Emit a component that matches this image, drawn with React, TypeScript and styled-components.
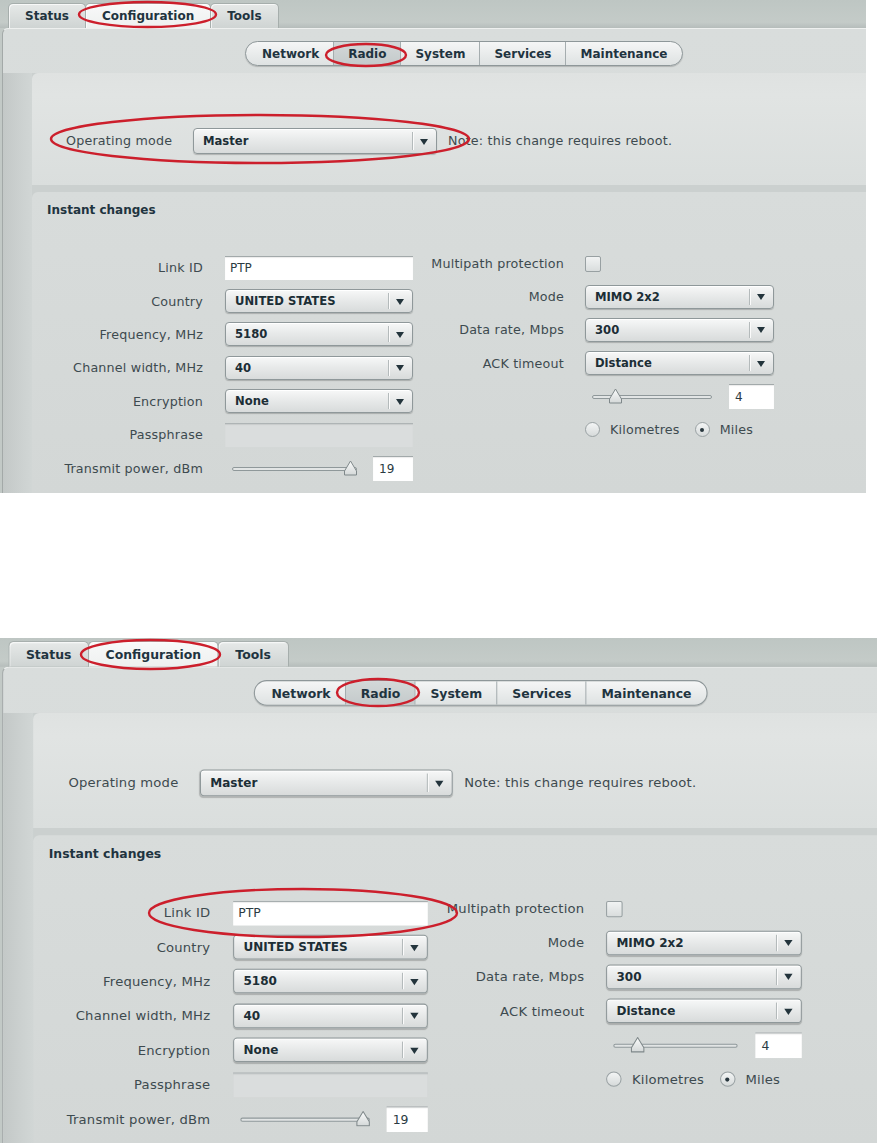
import React from "react";
import styled, { createGlobalStyle } from "styled-components";

const GlobalStyle = createGlobalStyle`
  html, body {
    margin: 0;
    padding: 0;
    background: #fff;
  }
  body {
    font-family: "DejaVu Sans", Verdana, sans-serif;
  }
`;

const Page = styled.div`
  display: flex;
  flex-direction: column;
  gap: 145px;
  width: 877px;
`;

const Shot = styled.div<{ $w: number; $h: number }>`
  position: relative;
  width: ${(p) => p.$w}px;
  height: ${(p) => p.$h}px;
  overflow: hidden;
`;

const Screen = styled.div<{ $sx: number; $sy: number }>`
  width: 866px;
  height: 493px;
  display: flex;
  flex-direction: column;
  background: #c2c9c6;
  transform: scale(${(p) => p.$sx}, ${(p) => p.$sy});
  transform-origin: 0 0;
`;

const TopBar = styled.div`
  height: 28px;
  box-sizing: border-box;
  padding-left: 8px;
  display: flex;
  align-items: flex-end;
  background: linear-gradient(#bec6c3, #c4cbc8 80%, #b6bdbb);
`;

const Tab = styled.div<{ $active?: boolean }>`
  height: 25px;
  box-sizing: border-box;
  padding: 0 16px;
  display: flex;
  align-items: center;
  font-size: 12px;
  font-weight: bold;
  color: #1f3440;
  border: 1px solid #a6aeac;
  border-bottom: none;
  border-radius: 5px 5px 0 0;
  margin-right: -1px;
  background: ${(p) =>
    p.$active
      ? "linear-gradient(#f8f9f9, #eef0ef)"
      : "linear-gradient(#e6e9e8, #cfd4d3)"};
  box-shadow: inset 1px 1px 0 rgba(255, 255, 255, 0.7);
`;

const Panel = styled.div`
  flex: 1;
  display: flex;
  flex-direction: column;
  margin-left: 2px;
  border-top: 1px solid #eef0ef;
  border-left: 1px solid #a3a9a8;
  border-top-left-radius: 6px;
  background: linear-gradient(#d9dddc, #d4d9d8);
  min-height: 0;
`;

const SubNav = styled.div`
  display: flex;
  padding: 12px 0 7px 242px;
`;

const Pill = styled.div`
  display: flex;
  height: 25px;
  box-sizing: border-box;
  border: 1px solid #8e9799;
  border-radius: 13px;
  overflow: hidden;
  background: linear-gradient(#f5f6f6, #dee2e2);
  box-shadow: 0 1px 1px rgba(0, 0, 0, 0.18);
`;

const PillItem = styled.div<{ $active?: boolean }>`
  display: flex;
  align-items: center;
  padding: 0 14px;
  font-size: 12px;
  font-weight: bold;
  color: #1f3440;
  border-left: 1px solid #a5adaf;
  background: ${(p) =>
    p.$active ? "linear-gradient(#d3d8d8, #c4cacb)" : "transparent"};

  &:first-child {
    border-left: none;
    padding-left: 16px;
  }
`;

const Body = styled.div`
  flex: 1;
  display: flex;
  padding-left: 29px;
  background: linear-gradient(90deg, #c3c8c7 0, #cdd2d1 20px, #d1d6d5 29px);
  min-height: 0;
`;

const Stack = styled.div`
  flex: 1;
  display: flex;
  flex-direction: column;
  gap: 7px;
  background: #cbd0cf;
`;

const ModeBox = styled.div`
  height: 112px;
  box-sizing: border-box;
  padding: 55px 0 0 34px;
  display: flex;
  align-items: flex-start;
  border-top-left-radius: 6px;
  background: linear-gradient(#dfe2e1, #e1e4e3 20%, #dadedd);
`;

const InstantBox = styled.div`
  flex: 1;
  border-top-left-radius: 6px;
  background: linear-gradient(#d8dcdb, #d3d7d6);
`;

const BoxTitle = styled.div`
  padding: 11px 0 0 15px;
  font-size: 12px;
  line-height: 14px;
  font-weight: bold;
  color: #1f3440;
`;

const FormArea = styled.div`
  display: flex;
  align-items: flex-start;
  margin-top: 34px;
`;

const FormColumn = styled.div<{ $label: number; $control: number; $gap: number; $row: number; $shift: number; $left: number }>`
  display: grid;
  grid-template-columns: ${(p) => p.$label}px ${(p) => p.$control}px;
  column-gap: ${(p) => p.$gap}px;
  grid-auto-rows: ${(p) => p.$row}px;
  align-items: center;
  margin-top: ${(p) => p.$shift}px;
  margin-left: ${(p) => p.$left}px;
`;

const Label = styled.div<{ $w?: number }>`
  ${(p) => (p.$w ? `width: ${p.$w}px; flex-shrink: 0;` : "")}
  text-align: right;
  font-size: 12.7px;
  letter-spacing: 0.2px;
  color: #3d4a4f;
  white-space: nowrap;
`;

const ModeLabel = styled(Label)`
  text-align: left;
  line-height: 26px;
`;

const Note = styled.div`
  margin-left: 11px;
  font-size: 12.7px;
  letter-spacing: 0.2px;
  line-height: 26px;
  color: #3d4a4f;
  white-space: nowrap;
`;

const SelectBox = styled.div<{ $w?: number; $h?: number }>`
  width: ${(p) => (p.$w ? `${p.$w}px` : "100%")};
  height: ${(p) => p.$h ?? 24}px;
  box-sizing: border-box;
  display: flex;
  align-items: center;
  border: 1px solid #8f989a;
  border-radius: 4px;
  background: linear-gradient(#f7f8f8, #e8eaea 45%, #d8dbdb);
  box-shadow: 0 1px 1px rgba(0, 0, 0, 0.2), inset 0 1px 0 #fff;
`;

const SelectValue = styled.span`
  flex: 1;
  padding-left: 9px;
  font-size: 11.6px;
  font-weight: bold;
  color: #1c2e36;
  white-space: nowrap;
`;

const SelectArrow = styled.span`
  position: relative;
  width: 24px;
  height: 100%;
  display: flex;
  align-items: center;
  justify-content: center;

  &::before {
    content: "";
    position: absolute;
    left: 0;
    top: 3px;
    bottom: 3px;
    width: 1px;
    background: #b4babb;
    box-shadow: 1px 0 0 #fbfbfb;
  }

  &::after {
    content: "";
    border-left: 4px solid transparent;
    border-right: 4px solid transparent;
    border-top: 6px solid #23343c;
    margin-top: 1px;
  }
`;

const TextField = styled.div<{ $w?: number; $disabled?: boolean }>`
  width: ${(p) => (p.$w ? `${p.$w}px` : "100%")};
  height: 24px;
  box-sizing: border-box;
  display: flex;
  align-items: center;
  padding-left: 5px;
  font-size: 12px;
  color: #2b3b42;
  background: ${(p) => (p.$disabled ? "#dadddd" : "#fff")};
  border-top: 1px solid ${(p) => (p.$disabled ? "#aeb4b5" : "#a2a9aa")};
  box-shadow: inset 0 1px 1px rgba(0, 0, 0, 0.08);
`;

const NumberField = styled(TextField)`
  height: 25px;
  padding-left: 6px;
  flex-shrink: 0;
`;

const ControlRow = styled.div`
  display: flex;
  align-items: center;
`;

const SliderWrap = styled.div<{ $w: number }>`
  position: relative;
  width: ${(p) => p.$w}px;
  height: 16px;
  margin-left: 7px;
  margin-right: auto;
  display: flex;
  align-items: center;
`;

const Track = styled.div`
  flex: 1;
  height: 4px;
  box-sizing: border-box;
  border: 1px solid #8f989a;
  border-radius: 3px;
  background: #e2e5e5;
  margin-top: 2px;
`;

const Thumb = styled.svg`
  position: absolute;
  top: 0;
  width: 15px;
  height: 16px;
  margin-left: -7px;
`;

const Check = styled.div`
  width: 16px;
  height: 16px;
  box-sizing: border-box;
  border: 1px solid #98a0a2;
  border-radius: 2px;
  background: linear-gradient(#f1f3f3, #d9dddd);
`;

const Radio = styled.div<{ $on?: boolean }>`
  width: 15px;
  height: 15px;
  box-sizing: border-box;
  border: 1px solid #9aa2a4;
  border-radius: 50%;
  background: linear-gradient(#f3f5f5, #d6dada);
  display: flex;
  align-items: center;
  justify-content: center;
  flex-shrink: 0;

  &::after {
    content: "";
    width: 4px;
    height: 4px;
    border-radius: 50%;
    background: ${(p) => (p.$on ? "#27363d" : "transparent")};
  }
`;

const RadioText = styled.span<{ $gap: number }>`
  margin-left: 10px;
  margin-right: ${(p) => p.$gap}px;
  font-size: 12.7px;
  letter-spacing: 0.2px;
  color: #3d4a4f;
`;

const Marks = styled.svg`
  position: absolute;
  left: 0;
  top: 0;
  pointer-events: none;
`;

type Ellipse = { cx: number; cy: number; rx: number; ry: number };

function Slider({ width, value }: { width: number; value: number }) {
  return (
    <SliderWrap $w={width}>
      <Track />
      <Thumb viewBox="0 0 15 16" style={{ left: `${value * 100}%` }}>
        <defs>
          <linearGradient id="thumbFill" x1="0" y1="0" x2="0" y2="1">
            <stop offset="0" stopColor="#fbfcfc" />
            <stop offset="1" stopColor="#d4d8d8" />
          </linearGradient>
        </defs>
        <path
          d="M7.5 1 L13.5 11 L13.5 15 L1.5 15 L1.5 11 Z"
          fill="url(#thumbFill)"
          stroke="#7f888a"
          strokeWidth="1"
          strokeLinejoin="round"
        />
      </Thumb>
    </SliderWrap>
  );
}

function Select({ value, width, height }: { value: string; width?: number; height?: number }) {
  return (
    <SelectBox $w={width} $h={height}>
      <SelectValue>{value}</SelectValue>
      <SelectArrow />
    </SelectBox>
  );
}

const leftRows: { label: string; kind: "text" | "select" | "disabled" | "slider"; value: string }[] = [
  { label: "Link ID", kind: "text", value: "PTP" },
  { label: "Country", kind: "select", value: "UNITED STATES" },
  { label: "Frequency, MHz", kind: "select", value: "5180" },
  { label: "Channel width, MHz", kind: "select", value: "40" },
  { label: "Encryption", kind: "select", value: "None" },
  { label: "Passphrase", kind: "disabled", value: "" },
  { label: "Transmit power, dBm", kind: "slider", value: "19" },
];

function RadioScreen({ sx, sy }: { sx: number; sy: number }) {
  return (
    <Screen $sx={sx} $sy={sy}>
      <TopBar>
        <Tab>Status</Tab>
        <Tab $active>Configuration</Tab>
        <Tab>Tools</Tab>
      </TopBar>
      <Panel>
        <SubNav>
          <Pill>
            <PillItem>Network</PillItem>
            <PillItem $active>Radio</PillItem>
            <PillItem>System</PillItem>
            <PillItem>Services</PillItem>
            <PillItem>Maintenance</PillItem>
          </Pill>
        </SubNav>
        <Body>
          <Stack>
            <ModeBox>
              <ModeLabel $w={127}>Operating mode</ModeLabel>
              <Select value="Master" width={244} height={26} />
              <Note>Note: this change requires reboot.</Note>
            </ModeBox>
            <InstantBox>
              <BoxTitle>Instant changes</BoxTitle>
              <FormArea>
                <FormColumn $label={171} $control={188} $gap={22} $row={33.4} $shift={0} $left={0}>
                  {leftRows.map((r) => (
                    <React.Fragment key={r.label}>
                      <Label>{r.label}</Label>
                      {r.kind === "text" && <TextField>{r.value}</TextField>}
                      {r.kind === "select" && <Select value={r.value} />}
                      {r.kind === "disabled" && <TextField $disabled />}
                      {r.kind === "slider" && (
                        <ControlRow>
                          <Slider width={125} value={0.94} />
                          <NumberField $w={40}>{r.value}</NumberField>
                        </ControlRow>
                      )}
                    </React.Fragment>
                  ))}
                </FormColumn>
                <FormColumn $label={144} $control={189} $gap={21} $row={33.2} $shift={-4} $left={7}>
                  <Label>Multipath protection</Label>
                  <Check />
                  <Label>Mode</Label>
                  <Select value="MIMO 2x2" />
                  <Label>Data rate, Mbps</Label>
                  <Select value="300" />
                  <Label>ACK timeout</Label>
                  <Select value="Distance" />
                  <Label />
                  <ControlRow>
                    <Slider width={120} value={0.19} />
                    <NumberField $w={45}>4</NumberField>
                  </ControlRow>
                  <Label />
                  <ControlRow>
                    <Radio />
                    <RadioText $gap={15}>Kilometres</RadioText>
                    <Radio $on />
                    <RadioText $gap={0}>Miles</RadioText>
                  </ControlRow>
                </FormColumn>
              </FormArea>
            </InstantBox>
          </Stack>
        </Body>
      </Panel>
    </Screen>
  );
}

function Annotations({ width, height, marks }: { width: number; height: number; marks: Ellipse[] }) {
  return (
    <Marks width={width} height={height} viewBox={`0 0 ${width} ${height}`}>
      {marks.map((m, i) => (
        <ellipse
          key={i}
          cx={m.cx}
          cy={m.cy}
          rx={m.rx}
          ry={m.ry}
          fill="none"
          stroke="#cc1f2c"
          strokeWidth="2.4"
        />
      ))}
    </Marks>
  );
}

const firstMarks: Ellipse[] = [
  { cx: 147.5, cy: 14.5, rx: 68.5, ry: 12.5 },
  { cx: 366, cy: 55, rx: 40, ry: 11 },
  { cx: 260, cy: 139, rx: 209, ry: 24 },
];

const secondMarks: Ellipse[] = [
  { cx: 150.5, cy: 16.5, rx: 69.5, ry: 14.5 },
  { cx: 378, cy: 54.5, rx: 41, ry: 13.5 },
  { cx: 303, cy: 275, rx: 154, ry: 24 },
];

export default function App() {
  return (
    <>
      <GlobalStyle />
      <Page>
        <Shot $w={866} $h={493}>
          <RadioScreen sx={1} sy={1} />
          <Annotations width={866} height={493} marks={firstMarks} />
        </Shot>
        <Shot $w={877} $h={505}>
          <RadioScreen sx={1.036} sy={1.027} />
          <Annotations width={877} height={505} marks={secondMarks} />
        </Shot>
      </Page>
    </>
  );
}
